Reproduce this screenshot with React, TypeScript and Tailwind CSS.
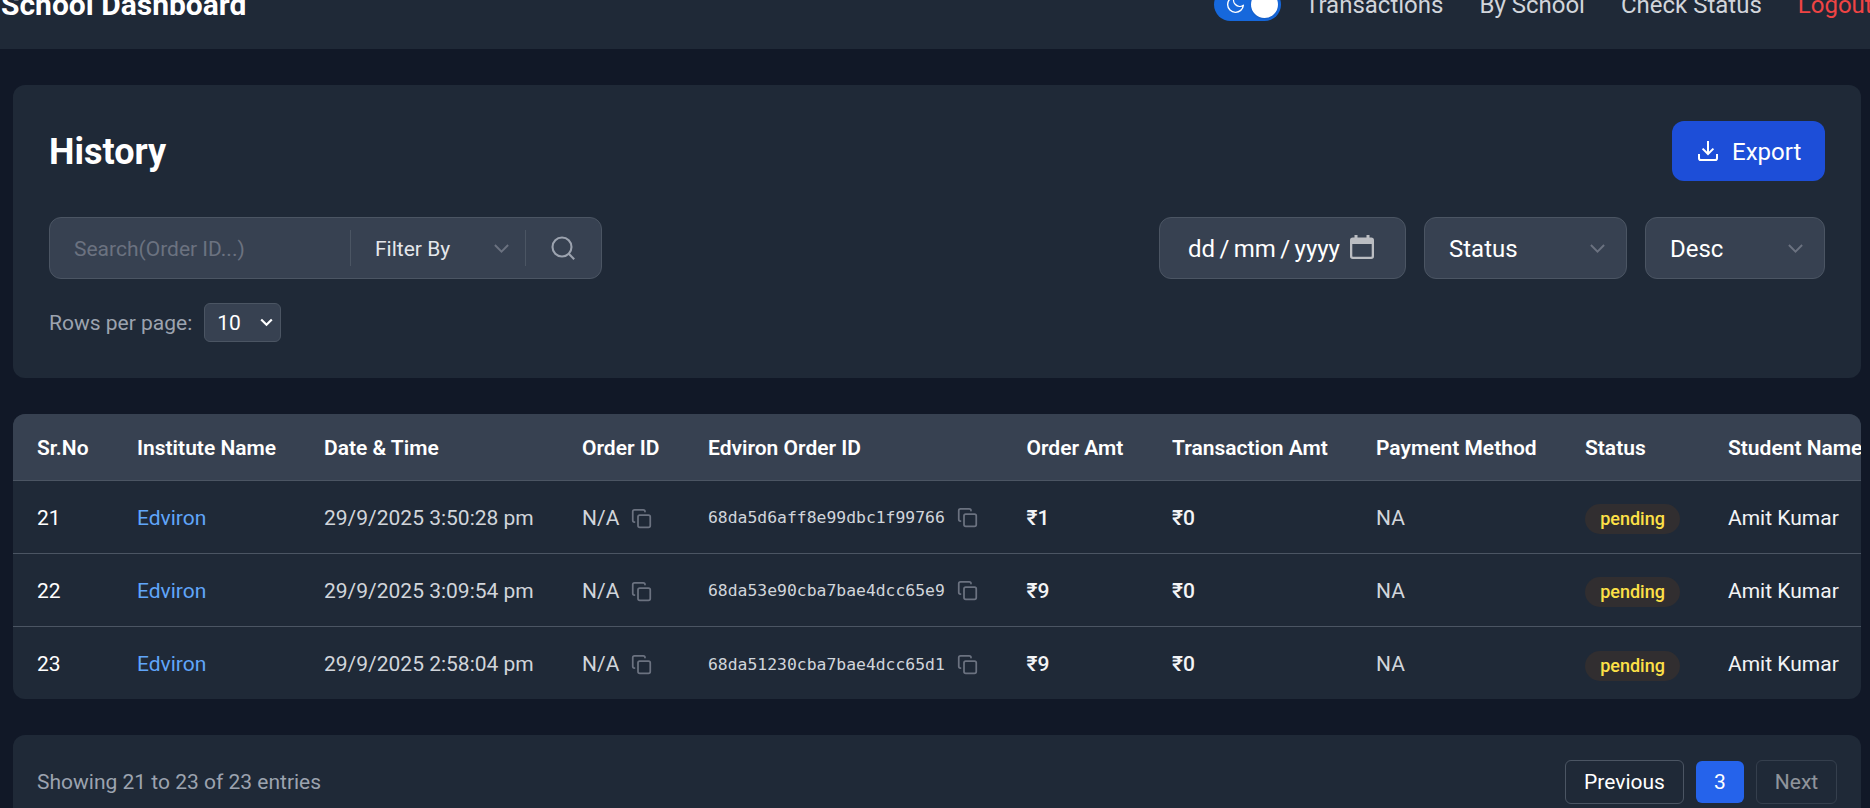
import React from "react";

const rows = [
  { no: 21, date: "29/9/2025 3:50:28 pm", id: "68da5d6aff8e99dbc1f99766", amt: "₹1" },
  { no: 22, date: "29/9/2025 3:09:54 pm", id: "68da53e90cba7bae4dcc65e9", amt: "₹9" },
  { no: 23, date: "29/9/2025 2:58:04 pm", id: "68da51230cba7bae4dcc65d1", amt: "₹9" },
];

const headings = [
  "Sr.No",
  "Institute Name",
  "Date & Time",
  "Order ID",
  "Edviron Order ID",
  "Order Amt",
  "Transaction Amt",
  "Payment Method",
  "Status",
  "Student Name",
];

const gridCols =
  "grid w-[1920px] grid-cols-[100px_187px_258px_126px_318.5px_145.5px_204px_209px_143px_1fr] items-center pl-6 whitespace-nowrap";

function CopyIcon() {
  return (
    <svg className="-mt-px size-[21px] shrink-0 text-[#6b7280]" viewBox="0 0 24 24" fill="none" stroke="currentColor" strokeWidth="2" strokeLinecap="round" strokeLinejoin="round">
      <rect x="8" y="8" width="14" height="14" rx="2" />
      <path d="M4 16c-1.1 0-2-.9-2-2V4c0-1.1.9-2 2-2h10c1.1 0 2 .9 2 2" />
    </svg>
  );
}

function Chevron() {
  return (
    <svg className="h-[9px] w-[15px] shrink-0 text-[#6b7280]" viewBox="0 0 15 9" fill="none" stroke="currentColor" strokeWidth="1.9">
      <path d="M.9 1l6.6 6.6L14.1 1" />
    </svg>
  );
}

function Header() {
  return (
    <header className="-mt-10 flex h-[89px] items-center justify-between bg-[#1f2937] whitespace-nowrap">
      <h1 className="pl-px text-[30px] leading-9 font-bold text-white">School Dashboard</h1>
      <nav className="flex w-[656px] shrink-0 items-center text-2xl text-[#d1d5db]">
        <div className="flex h-[33px] w-[67px] shrink-0 items-center justify-between rounded-full bg-[#1668dc] pr-[3px] pl-[11px]">
          <svg className="size-[21px] shrink-0 text-white" viewBox="0 0 24 24" fill="none" stroke="currentColor" strokeWidth="1.6" strokeLinejoin="round">
            <path d="M21 12.790A9 9 0 1 1 11.210 3 7 7 0 0 0 21 12.790z" />
          </svg>
          <span className="size-[27px] rounded-full bg-white shadow" />
        </div>
        <div className="ml-6 flex gap-9">
          <span>Transactions</span>
          <span>By School</span>
          <span>Check Status</span>
          <span className="text-[#ef4444]">Logout</span>
        </div>
      </nav>
    </header>
  );
}

function Filters() {
  return (
    <section className="h-[293px] rounded-xl bg-[#1f2937] p-9">
      <div className="flex h-[60px] items-center justify-between">
        <h2 className="mt-0.5 text-4xl font-bold text-white">History</h2>
        <button className="flex h-[60px] w-[153px] items-center gap-[14px] rounded-xl bg-[#1d4ed8] pl-[26px] text-2xl text-white">
          <svg className="size-5" viewBox="0 0 20 20" fill="none" stroke="currentColor" strokeWidth="2">
            <path d="M10 0v13M4.6 7.6L10 13l5.4-5.4M1 13v4.2c0 1 .8 1.8 1.8 1.8h14.4c1 0 1.8-.8 1.8-1.8V13" />
          </svg>
          <span className="pt-0.5">Export</span>
        </button>
      </div>

      <div className="mt-9 flex h-[62px] justify-between">
        <div className="flex w-[553px] items-center rounded-xl border border-[#4b5563] bg-[#374151] text-[21px]">
          <span className="w-[300px] pt-[3px] pl-6 text-[#6b7280]">Search(Order ID...)</span>
          <div className="flex h-9 w-[176px] items-center justify-between border-x border-[#4b5563] pr-4 pl-6 text-[#e5e7eb]">
            <span className="pt-[3px]">Filter By</span>
            <Chevron />
          </div>
          <div className="flex flex-1 justify-center pr-0.5">
            <svg className="size-6 text-[#9ca3af]" viewBox="0 0 24 24" fill="none" stroke="currentColor" strokeWidth="2.1">
              <circle cx="11" cy="11" r="9.5" />
              <path d="M17.8 17.8l5.4 5.4" />
            </svg>
          </div>
        </div>

        <div className="flex gap-[18px] text-2xl text-white">
          <div className="flex w-[247px] items-center rounded-xl border border-[#4b5563] bg-[#374151] pl-7">
            <div className="flex w-[162px] gap-[4.4px] pt-0.5 whitespace-nowrap">
              <span>dd</span>
              <span>/</span>
              <span>mm</span>
              <span>/</span>
              <span>yyyy</span>
            </div>
            <svg className="-mt-0.5 h-6 w-6 shrink-0 text-[#bbbdc2]" viewBox="0 0 24 24" fill="currentColor">
              <path fillRule="evenodd" d="M4.5 0h3v2.6h9V0h3v2.6h1.7A2.8 2.8 0 0 1 24 5.4v15.8a2.8 2.8 0 0 1-2.8 2.8H2.8A2.8 2.8 0 0 1 0 21.200V5.400a2.800 2.800 0 0 1 2.800-2.800h1.700zM2.300 9v12.300c0 .3.200.5.500.5h18.400c.3 0 .5-.2.5-.5V9z" />
            </svg>
          </div>
          <div className="flex w-[203px] items-center justify-between rounded-xl border border-[#4b5563] bg-[#374151] pr-[21px] pl-6">
            <span className="pt-0.5">Status</span>
            <Chevron />
          </div>
          <div className="flex w-[180px] items-center justify-between rounded-xl border border-[#4b5563] bg-[#374151] pr-[21px] pl-6">
            <span className="pt-0.5">Desc</span>
            <Chevron />
          </div>
        </div>
      </div>

      <div className="mt-6 flex h-[39px] items-center gap-3 text-[21px] text-[#9ca3af]">
        <span className="pt-0.5">Rows per page:</span>
        <div className="flex h-[39px] w-[77px] items-center justify-between rounded-md border border-[#4b5563] bg-[#374151] pr-[7px] pl-3 text-white">
          <span className="pt-0.5">10</span>
          <svg className="h-[9px] w-[13px]" viewBox="0 0 13 9" fill="none" stroke="currentColor" strokeWidth="2.2">
            <path d="M1.200 1.500l5.300 5.300 5.300-5.300" />
          </svg>
        </div>
      </div>
    </section>
  );
}

function PaymentsTable() {
  return (
    <section className="mt-9 h-[285px] overflow-hidden rounded-xl bg-[#1f2937] text-[21px]">
      <div className={`${gridCols} h-[67px] border-b border-[#4b5563] bg-[#374151] pt-[3px] font-semibold text-white`}>
        {headings.map((h) => (
          <span key={h}>{h}</span>
        ))}
      </div>
      {rows.map((r) => (
        <div key={r.no} className={`${gridCols} h-[73px] border-b border-[#4b5563] pt-[3px] text-[#d1d5db] last:border-b-0`}>
          <span className="text-white">{r.no}</span>
          <span className="text-[#60a5fa]">Edviron</span>
          <span>{r.date}</span>
          <span className="flex items-center gap-3">
            N/A
            <CopyIcon />
          </span>
          <span className="flex items-center gap-3">
            <span className="font-['DejaVu_Sans_Mono',monospace] text-[16.4px]">{r.id}</span>
            <CopyIcon />
          </span>
          <span className="font-medium text-[#f3f4f6]">{r.amt}</span>
          <span className="font-medium text-[#f3f4f6]">₹0</span>
          <span>NA</span>
          <span>
            <span className="mt-px flex h-[30px] w-[95px] items-center justify-center rounded-full bg-[#312e30] text-lg font-medium text-[#fde047]">
              pending
            </span>
          </span>
          <span className="text-[#f3f4f6]">Amit Kumar</span>
        </div>
      ))}
    </section>
  );
}

function Pagination() {
  return (
    <section className="mt-9 flex h-[93px] items-center justify-between rounded-xl bg-[#1f2937] px-6 text-[21px]">
      <span className="pt-0.5 text-[#9ca3af]">Showing 21 to 23 of 23 entries</span>
      <div className="flex items-center gap-3 text-white">
        <button className="h-11 w-[119px] rounded-md border border-[#4b5563] pt-0.5">Previous</button>
        <button className="h-[42px] w-12 rounded-md bg-[#2563eb] pt-0.5">3</button>
        <button className="h-11 w-[81px] rounded-md border border-[#4b5563] pt-0.5 opacity-50">Next</button>
      </div>
    </section>
  );
}

export default function App() {
  return (
    <div className="flow-root h-[808px] w-[1870px] overflow-hidden bg-[#111827] font-[Roboto,sans-serif]">
      <Header />
      <main className="mt-9 mr-[9px] ml-[13px]">
        <Filters />
        <PaymentsTable />
        <Pagination />
      </main>
    </div>
  );
}
